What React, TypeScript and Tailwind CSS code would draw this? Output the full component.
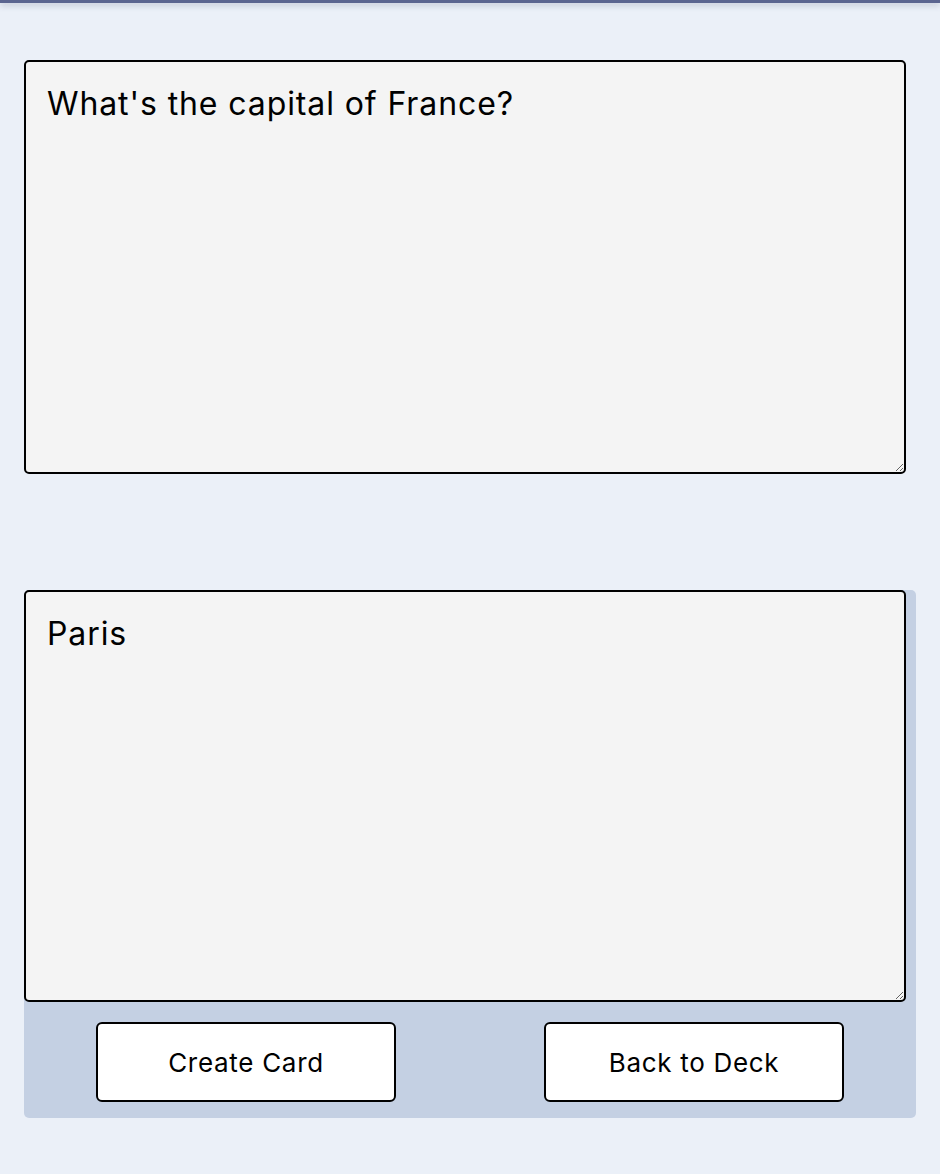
import React from "react";

export default function App() {
  return (
    <div
      className="min-h-[1174px] w-full bg-[#ebf0f8]"
      style={{ fontFamily: "Inter, 'Noto Sans', sans-serif" }}
    >
      <div className="h-[3px] w-full bg-[#5b6590] shadow-[0_2px_6px_rgba(60,70,110,0.35)]" />
      <div className="px-[24px] pt-[57px]">
        <div className="w-[882px]">
          <textarea
            defaultValue="What's the capital of France?"
            className="block h-[414px] w-[882px] resize rounded-[5px] border-2 border-black bg-[#f4f4f4] px-[21px] pt-[21px] text-[32px] leading-[1.3] tracking-[0.9px] text-black outline-none"
            style={{ fontFamily: "Inter, 'Noto Sans', sans-serif" }}
          />
        </div>
        <div className="mt-[116px] w-[892px] rounded-[5px] bg-[#c4d0e3] pb-[16px]">
          <textarea
            defaultValue="Paris"
            className="block h-[412px] w-[882px] resize rounded-[5px] border-2 border-black bg-[#f4f4f4] px-[21px] pt-[21px] text-[32px] leading-[1.3] tracking-[0.9px] text-black outline-none"
            style={{ fontFamily: "Inter, 'Noto Sans', sans-serif" }}
          />
          <div className="mt-[20px] flex justify-between px-[72px]">
            <button className="h-[80px] w-[300px] rounded-[6px] border-2 border-black bg-white text-[26px] tracking-[0.7px] text-black">
              Create Card
            </button>
            <button className="h-[80px] w-[300px] rounded-[6px] border-2 border-black bg-white text-[26px] tracking-[0.7px] text-black">
              Back to Deck
            </button>
          </div>
        </div>
      </div>
    </div>
  );
}
